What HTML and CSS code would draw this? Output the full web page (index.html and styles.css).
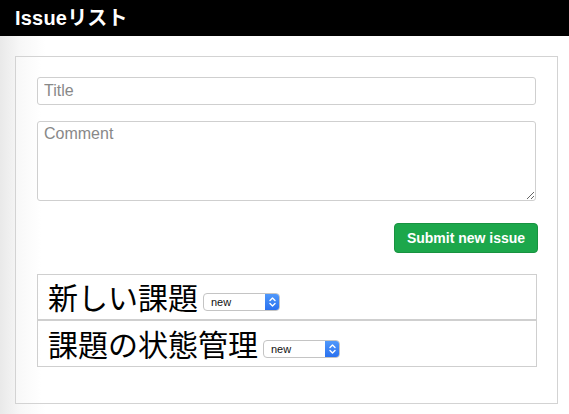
FILE: index.html
```html
<!DOCTYPE html>
<html lang="ja">
<head>
<meta charset="utf-8">
<title>Issueリスト</title>
<link rel="stylesheet" href="styles.css">
</head>
<body>
<header class="topbar">Issueリスト</header>
<main class="page">
  <section class="panel">
    <form class="issue-form">
      <input class="field title-field" type="text" placeholder="Title">
      <textarea class="field comment-field" placeholder="Comment"></textarea>
      <div class="actions">
        <button type="button" class="submit-btn">Submit new issue</button>
      </div>
    </form>
    <ul class="issue-list">
      <li class="issue-row">
        <span class="issue-title">新しい課題</span>
        <span class="select"><span class="select-label">new</span><span class="select-arrows"><svg width="9" height="12" viewBox="0 0 9 12"><path d="M2 4.5 L4.5 2 L7 4.5 M2 7.5 L4.5 10 L7 7.5" fill="none" stroke="#fff" stroke-width="1.4" stroke-linecap="round" stroke-linejoin="round"/></svg></span></span>
      </li>
      <li class="issue-row">
        <span class="issue-title">課題の状態管理</span>
        <span class="select"><span class="select-label">new</span><span class="select-arrows"><svg width="9" height="12" viewBox="0 0 9 12"><path d="M2 4.5 L4.5 2 L7 4.5 M2 7.5 L4.5 10 L7 7.5" fill="none" stroke="#fff" stroke-width="1.4" stroke-linecap="round" stroke-linejoin="round"/></svg></span></span>
      </li>
    </ul>
  </section>
</main>
</body>
</html>
```

FILE: styles.css
```css
html, body {
  margin: 0;
  padding: 0;
  height: 100%;
}
body {
  font-family: "Liberation Sans", Arial, "Noto Sans CJK JP", sans-serif;
  background: #fff;
}
.topbar {
  background: #000;
  color: #fff;
  height: 36px;
  line-height: 36px;
  padding-left: 15px;
  font-weight: bold;
  font-size: 20px;
  letter-spacing: 0.2px;
  font-family: "Liberation Sans", Arial, "Noto Sans CJK JP", sans-serif;
}
.page {
  background: linear-gradient(to right, #e9e9e9 0px, #f7f7f7 20px, #fff 45px);
  padding: 20px 11px 10px 15px;
  height: calc(100% - 36px);
  box-sizing: border-box;
}
.panel {
  border: 1px solid #d3d3d3;
  padding: 20px 19px 36px 21px;
  background: linear-gradient(to right, #f8f8f8 0px, #fff 25px);
}
.issue-form {
  display: flex;
  flex-direction: column;
  margin: 0;
}
.field {
  font-family: "Liberation Sans", Arial, sans-serif;
  font-size: 16px;
  color: #333;
  border: 1px solid #cfcfcf;
  border-radius: 3px;
  padding: 0 6px;
  box-sizing: border-box;
  width: calc(100% - 2px);
  background: #fff;
  outline: none;
}
.field::placeholder {
  color: #888;
}
.title-field {
  height: 28px;
}
.comment-field {
  margin-top: 16px;
  height: 80px;
  padding-top: 3px;
  resize: vertical;
}
.actions {
  display: flex;
  justify-content: flex-end;
  margin-top: 22px;
}
.submit-btn {
  background: #1ca74b;
  border: 1px solid #189340;
  border-radius: 4px;
  color: #fff;
  font-family: "Liberation Sans", Arial, sans-serif;
  font-weight: bold;
  font-size: 14px;
  height: 30px;
  width: 144px;
  padding: 0;
}
.issue-list {
  list-style: none;
  margin: 21px 1px 0 0;
  padding: 0;
}
.issue-row {
  border: 1px solid #cfcfcf;
  height: 46px;
  box-sizing: border-box;
  padding-left: 10px;
  display: flex;
  align-items: flex-end;
  padding-bottom: 5px;
}
.issue-row + .issue-row {
  height: 47px;
}
.issue-title {
  font-family: "Noto Sans CJK JP", sans-serif;
  font-size: 30px;
  line-height: 36px;
  color: #000;
}
.select {
  display: inline-flex;
  align-items: stretch;
  width: 77px;
  height: 18px;
  margin-left: 5px;
  margin-bottom: 3px;
  border: 1px solid #c4c4c4;
  border-radius: 4px;
  box-sizing: border-box;
  background: #fff;
  overflow: hidden;
}
.select-label {
  flex: 1;
  font-family: "Liberation Sans", Arial, sans-serif;
  font-size: 11px;
  line-height: 16px;
  padding-left: 7px;
  color: #111;
}
.select-arrows {
  width: 14px;
  background: linear-gradient(#4f98fb, #2a71ef);
  display: flex;
  align-items: center;
  justify-content: center;
}
```
